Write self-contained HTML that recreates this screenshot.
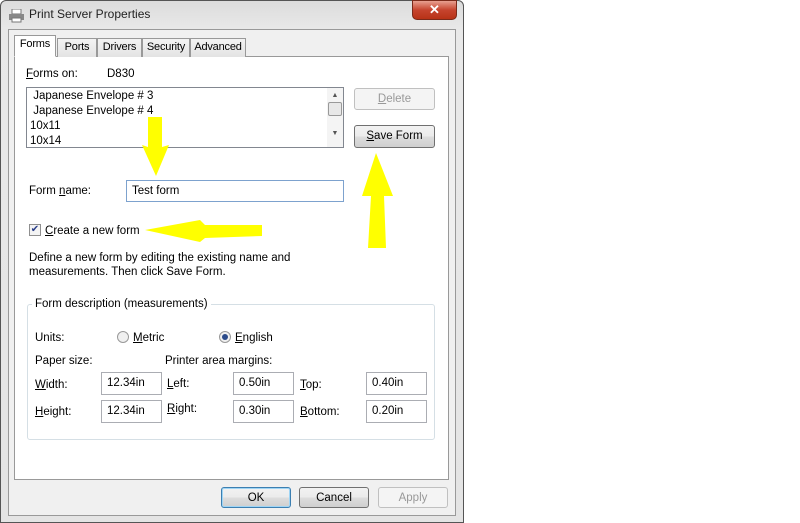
<!DOCTYPE html>
<html><head><style>
*{margin:0;padding:0;box-sizing:border-box}
body{width:800px;height:523px;background:#fff;position:relative;overflow:hidden;font-family:"Liberation Sans",sans-serif;font-size:11.5px;color:#000}
.a{position:absolute}
.win{left:0;top:0;width:464px;height:523px;background:linear-gradient(#dcdcdc,#e9e9e9 30px,#e4e4e4);border:1px solid #555;border-radius:6px 6px 0 0}
.client{left:8px;top:29px;width:448px;height:487px;background:#f0f0f0;border:1px solid #999}
.tab{top:38px;height:19px;border:1px solid #999;border-bottom:none;background:linear-gradient(#f3f3f3,#e3e3e3);text-align:center;line-height:17px;font-size:11px;letter-spacing:-0.2px}
.panel{left:14px;top:56px;width:435px;height:424px;background:#fff;border:1px solid #999}
.btn{border:1px solid #707070;border-radius:3px;background:linear-gradient(#f2f2f2,#ebebeb 50%,#dddddd 51%,#cfcfcf);text-align:center;line-height:20px;font-size:11.5px}
.inp{border:1px solid #abadb3;background:#fff;padding-left:5px;line-height:20px}
.y{fill:#ffff00}
u{text-decoration:underline}
.t{margin-top:1px}
</style></head><body>
<div class="a win"></div>
<svg class="a" style="left:9px;top:9px" width="16" height="14"><rect x="3" y="0" width="9" height="5" fill="#fff" stroke="#777"/><rect x="0" y="5" width="15" height="6" fill="#888"/><rect x="3" y="9" width="9" height="4" fill="#fff" stroke="#777"/></svg>
<div class="a" style="left:29px;top:7px;font-size:12px;color:#222">Print Server Properties</div>
<div class="a" style="left:412px;top:0;width:45px;height:20px;border-radius:0 0 5px 5px;background:linear-gradient(#e8a090,#c6442e 50%,#b83216);border:1px solid #7a2a1a;color:#fff;text-align:center;font-weight:bold;font-size:13px;line-height:18px">✕</div>
<div class="a client"></div>
<div class="a panel"></div>
<div class="a tab" style="left:14px;top:35px;height:22px;width:42px;background:#fff;border-bottom:1px solid #fff">Forms</div>
<div class="a tab" style="left:57px;width:40px">Ports</div>
<div class="a tab" style="left:97px;width:45px">Drivers</div>
<div class="a tab" style="left:142px;width:48px">Security</div>
<div class="a tab" style="left:190px;width:56px">Advanced</div>
<div class="a" style="left:26px;top:68px"><u>F</u>orms on:</div>
<div class="a" style="left:107px;top:68px">D830</div>
<div class="a" style="left:26px;top:87px;width:318px;height:61px;border:1px solid #828790;background:#fff;line-height:15px;padding-left:3px;padding-top:1px">
<div>&nbsp;Japanese Envelope # 3</div><div>&nbsp;Japanese Envelope # 4</div><div>10x11</div><div>10x14</div></div>
<div class="a" style="left:327px;top:88px;width:16px;height:59px;background:#f4f4f4"><div style="font-size:7px;color:#555;text-align:center;margin-top:4px">▲</div><div style="margin:3px 1px;height:14px;border:1px solid #999;border-radius:2px;background:#e8e8e8"></div><div style="font-size:7px;color:#555;text-align:center;margin-top:14px">▼</div></div>
<div class="a btn" style="left:354px;top:88px;width:81px;height:22px;color:#999;border-color:#c0c0c0;background:#f4f4f4"><u>D</u>elete</div>
<div class="a btn" style="left:354px;top:125px;width:81px;height:23px"><u>S</u>ave Form</div>
<div class="a" style="left:29px;top:185px">Form <u>n</u>ame:</div>
<div class="a inp" style="left:126px;top:180px;width:218px;height:22px;border-color:#7da2ce;line-height:21px">Test form</div>
<div class="a" style="left:29px;top:224px;width:12px;height:12px;border:1px solid #8f8f8f;background:#f4f4f4;font-size:10px;line-height:10px;text-align:center;color:#2a3f8a">✔</div>
<div class="a" style="left:45px;top:225px"><u>C</u>reate a new form</div>
<div class="a" style="left:29px;top:251px;line-height:14px">Define a new form by editing the existing name and<br>measurements. Then click Save Form.</div>
<div class="a" style="left:27px;top:304px;width:408px;height:136px;border:1px solid #d5dfe5;border-radius:3px"></div>
<div class="a" style="left:32px;top:298px;background:#fff;padding:0 3px">Form description (measurements)</div>
<div class="a" style="left:35px;top:332px">Units:</div>
<div class="a" style="left:117px;top:331px;width:12px;height:12px;border:1px solid #999;border-radius:50%;background:#f0f0f0"></div>
<div class="a" style="left:133px;top:332px"><u>M</u>etric</div>
<div class="a" style="left:219px;top:331px;width:12px;height:12px;border:1px solid #999;border-radius:50%;background:#f0f0f0"><div style="margin:2px;width:6px;height:6px;border-radius:50%;background:#2a4a8a"></div></div>
<div class="a" style="left:235px;top:332px"><u>E</u>nglish</div>
<div class="a" style="left:35px;top:355px">Paper size:</div>
<div class="a" style="left:165px;top:355px">Printer area margins:</div>
<div class="a" style="left:35px;top:379px"><u>W</u>idth:</div>
<div class="a inp" style="left:101px;top:372px;width:61px;height:23px">12.34in</div>
<div class="a" style="left:167px;top:378px"><u>L</u>eft:</div>
<div class="a inp" style="left:233px;top:372px;width:61px;height:23px">0.50in</div>
<div class="a" style="left:300px;top:379px"><u>T</u>op:</div>
<div class="a inp" style="left:366px;top:372px;width:61px;height:23px">0.40in</div>
<div class="a" style="left:35px;top:406px"><u>H</u>eight:</div>
<div class="a inp" style="left:101px;top:400px;width:61px;height:23px">12.34in</div>
<div class="a" style="left:167px;top:403px"><u>R</u>ight:</div>
<div class="a inp" style="left:233px;top:400px;width:61px;height:23px">0.30in</div>
<div class="a" style="left:300px;top:406px"><u>B</u>ottom:</div>
<div class="a inp" style="left:366px;top:400px;width:61px;height:23px">0.20in</div>
<div class="a btn" style="left:221px;top:487px;width:70px;height:21px;border-color:#3c7fb1;box-shadow:inset 0 0 0 1px #9fd5f5">OK</div>
<div class="a btn" style="left:299px;top:487px;width:70px;height:21px">Cancel</div>
<div class="a btn" style="left:378px;top:487px;width:70px;height:21px;color:#999;border-color:#c0c0c0;background:#f4f4f4">Apply</div>
<svg class="a" style="left:0;top:0" width="470" height="523">
<polygon class="y" points="148,117 162,117 162,147 169,145 156,176 142,145 148,147"/>
<polygon class="y" points="376,153 393,196 384,196 386,248 368,248 371,196 362,196"/>
<polygon class="y" points="145,230 200,220 205,225 262,225 262,236 205,238 200,242"/>
</svg>
</body></html>
